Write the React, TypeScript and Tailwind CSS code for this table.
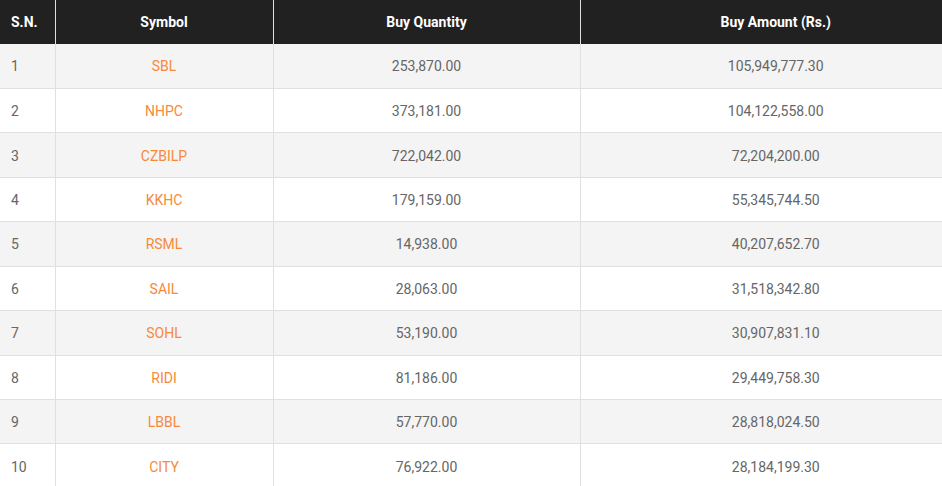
import React from "react";

const rows = [
  ["1", "SBL", "253,870.00", "105,949,777.30"],
  ["2", "NHPC", "373,181.00", "104,122,558.00"],
  ["3", "CZBILP", "722,042.00", "72,204,200.00"],
  ["4", "KKHC", "179,159.00", "55,345,744.50"],
  ["5", "RSML", "14,938.00", "40,207,652.70"],
  ["6", "SAIL", "28,063.00", "31,518,342.80"],
  ["7", "SOHL", "53,190.00", "30,907,831.10"],
  ["8", "RIDI", "81,186.00", "29,449,758.30"],
  ["9", "LBBL", "57,770.00", "28,818,024.50"],
  ["10", "CITY", "76,922.00", "28,184,199.30"],
];

export default function App() {
  return (
    <div className="w-[942px] h-[486px] overflow-hidden bg-white" style={{ fontFamily: "Roboto, 'Liberation Sans', sans-serif" }}>
      <table className="w-[971px] border-collapse table-fixed text-[14px]">
        <colgroup>
          <col className="w-[55px]" />
          <col className="w-[218px]" />
          <col className="w-[307px]" />
          <col />
        </colgroup>
        <thead>
          <tr className="h-[44px] bg-[#212121] text-white font-bold">
            <th className="text-left pl-[11px] border-r border-[#e0e0e0]">S.N.</th>
            <th className="text-center border-r border-[#e0e0e0]">Symbol</th>
            <th className="text-center border-r border-[#e0e0e0]">Buy Quantity</th>
            <th className="text-center">Buy Amount (Rs.)</th>
          </tr>
        </thead>
        <tbody>
          {rows.map((r, i) => (
            <tr key={i} className={`h-[44.45px] text-[#666666] ${i % 2 === 0 ? "bg-[#f4f4f4]" : "bg-white"}`}>
              <td className="text-left pl-[11px] pt-[2px] border-r border-b border-[#e0e0e0]">{r[0]}</td>
              <td className="text-center pt-[2px] text-[#f7893b] border-r border-b border-[#e0e0e0]">{r[1]}</td>
              <td className="text-center pt-[2px] border-r border-b border-[#e0e0e0]">{r[2]}</td>
              <td className="text-center pt-[2px] border-b border-[#e0e0e0]">{r[3]}</td>
            </tr>
          ))}
        </tbody>
      </table>
    </div>
  );
}
